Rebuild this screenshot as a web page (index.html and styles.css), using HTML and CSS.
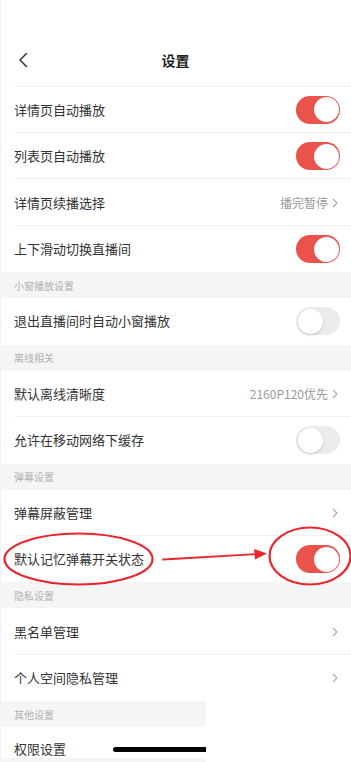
FILE: index.html
```html
<!DOCTYPE html>
<html lang="zh-CN">
<head>
<meta charset="utf-8">
<title>设置</title>
<link rel="stylesheet" href="styles.css">
</head>
<body>
<div class="page">
  <header class="nav">
    <svg class="back" width="12" height="16" viewBox="0 0 12 16"><polyline points="9.5,1.5 3,8 9.5,14.5" fill="none" stroke="#333" stroke-width="1.5" stroke-linecap="round" stroke-linejoin="round"/></svg>
    <h1 class="title">设置</h1>
  </header>

  <div class="row div"><span class="label">详情页自动播放</span><span class="switch on"></span></div>
  <div class="row div"><span class="label">列表页自动播放</span><span class="switch on"></span></div>
  <div class="row div"><span class="label">详情页续播选择</span><span class="value">播完暂停</span><svg class="chev" width="6" height="10" viewBox="0 0 6 10"><polyline points="1,1 5,5 1,9" fill="none" stroke="#a8a8a8" stroke-width="1.1"/></svg></div>
  <div class="row"><span class="label">上下滑动切换直播间</span><span class="switch on"></span></div>

  <div class="sec">小窗播放设置</div>
  <div class="row"><span class="label">退出直播间时自动小窗播放</span><span class="switch"></span></div>

  <div class="sec">离线相关</div>
  <div class="row div"><span class="label">默认离线清晰度</span><span class="value">2160P120优先</span><svg class="chev" width="6" height="10" viewBox="0 0 6 10"><polyline points="1,1 5,5 1,9" fill="none" stroke="#a8a8a8" stroke-width="1.1"/></svg></div>
  <div class="row"><span class="label">允许在移动网络下缓存</span><span class="switch"></span></div>

  <div class="sec">弹幕设置</div>
  <div class="row div"><span class="label">弹幕屏蔽管理</span><svg class="chev" width="6" height="10" viewBox="0 0 6 10"><polyline points="1,1 5,5 1,9" fill="none" stroke="#a8a8a8" stroke-width="1.1"/></svg></div>
  <div class="row"><span class="label">默认记忆弹幕开关状态</span><span class="switch on"></span></div>

  <div class="sec">隐私设置</div>
  <div class="row div"><span class="label">黑名单管理</span><svg class="chev" width="6" height="10" viewBox="0 0 6 10"><polyline points="1,1 5,5 1,9" fill="none" stroke="#a8a8a8" stroke-width="1.1"/></svg></div>
  <div class="row"><span class="label">个人空间隐私管理</span><svg class="chev" width="6" height="10" viewBox="0 0 6 10"><polyline points="1,1 5,5 1,9" fill="none" stroke="#a8a8a8" stroke-width="1.1"/></svg></div>

  <div class="tail">
    <div class="sec">其他设置</div>
    <div class="row short"><span class="label">权限设置</span></div>
    <div class="tail-gap"></div>
    <span class="home"></span>
  </div>

  <svg class="annot" width="351" height="762" viewBox="0 0 351 762">
    <ellipse cx="78.5" cy="559" rx="74" ry="25.5" fill="none" stroke="#e8262c" stroke-width="2.2"/>
    <ellipse cx="310" cy="556" rx="40.5" ry="28.5" fill="none" stroke="#e8262c" stroke-width="2.2"/>
    <line x1="163" y1="559.5" x2="257" y2="554" stroke="#e8262c" stroke-width="1.8" stroke-linecap="round"/>
    <polygon points="254,549 267,553.5 255,559.5" fill="#e8262c"/>
  </svg>
</div>
</body>
</html>
```

FILE: styles.css
```css
* { box-sizing: border-box; }
html, body { margin: 0; padding: 0; background: #fff; }
body {
  font-family: "Noto Sans CJK SC", "Noto Sans", sans-serif;
  color: #333;
}
.page {
  position: relative;
  width: 351px;
  height: 762px;
  overflow: hidden;
  background: #fff;
  border-left: 1px solid #f2f2f2;
}
.nav {
  position: relative;
  height: 86.5px;
  padding-top: 33px;
  display: flex;
  align-items: center;
  justify-content: center;
}
.nav::after {
  content: "";
  position: absolute;
  left: 13px; right: 0; bottom: 0;
  height: 1px;
  background: #f3f3f3;
}
.back {
  position: absolute;
  left: 16px;
  top: 52px;
}
.title {
  margin: 0;
  font-size: 14px;
  font-weight: 700;
  color: #222;
  line-height: 20px;
  padding-right: 1px;
}
.row {
  position: relative;
  height: 46.45px;
  display: flex;
  align-items: center;
  padding: 0 11px 0 13px;
}
.row.div::after {
  content: "";
  position: absolute;
  left: 13px; right: 0; bottom: 0;
  height: 1px;
  background: #f1f1f1;
}
.label {
  flex: 1;
  font-size: 13px;
  line-height: 18px;
  color: #333;
}
.value {
  font-size: 12px;
  color: #9a9a9a;
  margin-right: 4px;
}
.chev { margin-right: 2px; }
.switch {
  position: relative;
  width: 44px;
  height: 28px;
  border-radius: 14px;
  background: #ececec;
}
.switch::after {
  content: "";
  position: absolute;
  top: 1.5px;
  left: 1.5px;
  width: 25px;
  height: 25px;
  border-radius: 50%;
  background: #fff;
  box-shadow: 0 1px 3px rgba(0,0,0,0.18);
}
.switch.on { background: #e9534b; }
.switch.on::after {
  left: auto;
  right: 1.5px;
  box-shadow: none;
}
.sec {
  height: 26px;
  background: #f5f5f5;
  padding: 0 0 0 13px;
  display: flex;
  align-items: center;
  font-size: 10px;
  color: #b0b0b0;
}
.tail {
  position: relative;
  width: 205px;
  overflow: hidden;
}
.row.short { height: 31px; padding-top: 12px; }
.tail-gap { height: 10px; background: #f5f5f5; }
.home {
  position: absolute;
  left: 112px;
  top: 46px;
  width: 140px;
  height: 4.5px;
  border-radius: 3px;
  background: #000;
}
.annot {
  position: absolute;
  left: -1px;
  top: 0;
  pointer-events: none;
}
```
